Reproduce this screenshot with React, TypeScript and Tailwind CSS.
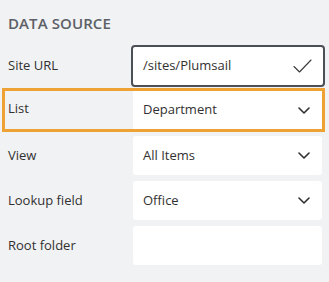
import React from 'react';

const font = { fontFamily: '"Open Sans", "Liberation Sans", sans-serif' };

function Chevron() {
  return (
    <svg width="12" height="7" viewBox="0 0 12 7" fill="none" className="shrink-0">
      <path d="M1 1l5 5 5-5" stroke="#323130" strokeWidth="1.6" strokeLinecap="round" strokeLinejoin="round" />
    </svg>
  );
}

function Check() {
  return (
    <svg width="19" height="14" viewBox="0 0 19 14" fill="none" className="shrink-0">
      <path d="M1 7.5l5.5 5.5L18 1" stroke="#3b3a39" strokeWidth="1.1" strokeLinecap="round" strokeLinejoin="round" />
    </svg>
  );
}

function Row({ label, value, select = true }: { label: string; value?: string; select?: boolean }) {
  return (
    <div className="flex h-[39px] items-center">
      <div className="w-[125px] shrink-0 text-[13px] text-[#323130]">{label}</div>
      <div className="flex h-full flex-1 items-center justify-between rounded-[3px] bg-white pl-[10px] pr-[12px] text-[13px] text-[#323130]">
        <span>{value}</span>
        {select && <Chevron />}
      </div>
    </div>
  );
}

export default function App() {
  return (
    <div className="h-[282px] w-[329px] overflow-hidden bg-[#f1f2f4] pl-[8px] pr-[7px]" style={font}>
      <div className="pt-[13px] text-[15px] font-semibold uppercase leading-[20px] tracking-[0.1px] text-[#5c6066]">
        Data Source
      </div>

      <div className="mt-[12px] flex h-[42px] items-center">
        <div className="w-[123px] shrink-0 text-[13px] text-[#323130]">Site URL</div>
        <div className="mr-[-3px] flex h-full flex-1 items-center justify-between rounded-[4px] border-2 border-[#4b5057] bg-white pl-[10px] pr-[11px] text-[13px] text-[#323130]">
          <span>/sites/Plumsail</span>
          <Check />
        </div>
      </div>

      <div className="mt-[1px] ml-[-6px] mr-[-3px] flex h-[44px] items-stretch border-[3px] border-[#eda233] pl-[3px]">
        <div className="flex w-[125px] shrink-0 items-center pb-[3px] text-[13px] text-[#323130]">List</div>
        <div className="flex flex-1 items-center justify-between bg-white pl-[10px] pr-[12px] text-[13px] text-[#323130]">
          <span>Department</span>
          <Chevron />
        </div>
      </div>

      <div className="mt-[4px] flex flex-col gap-[6px]">
        <Row label="View" value="All Items" />
        <Row label="Lookup field" value="Office" />
        <Row label="Root folder" select={false} />
      </div>
    </div>
  );
}
